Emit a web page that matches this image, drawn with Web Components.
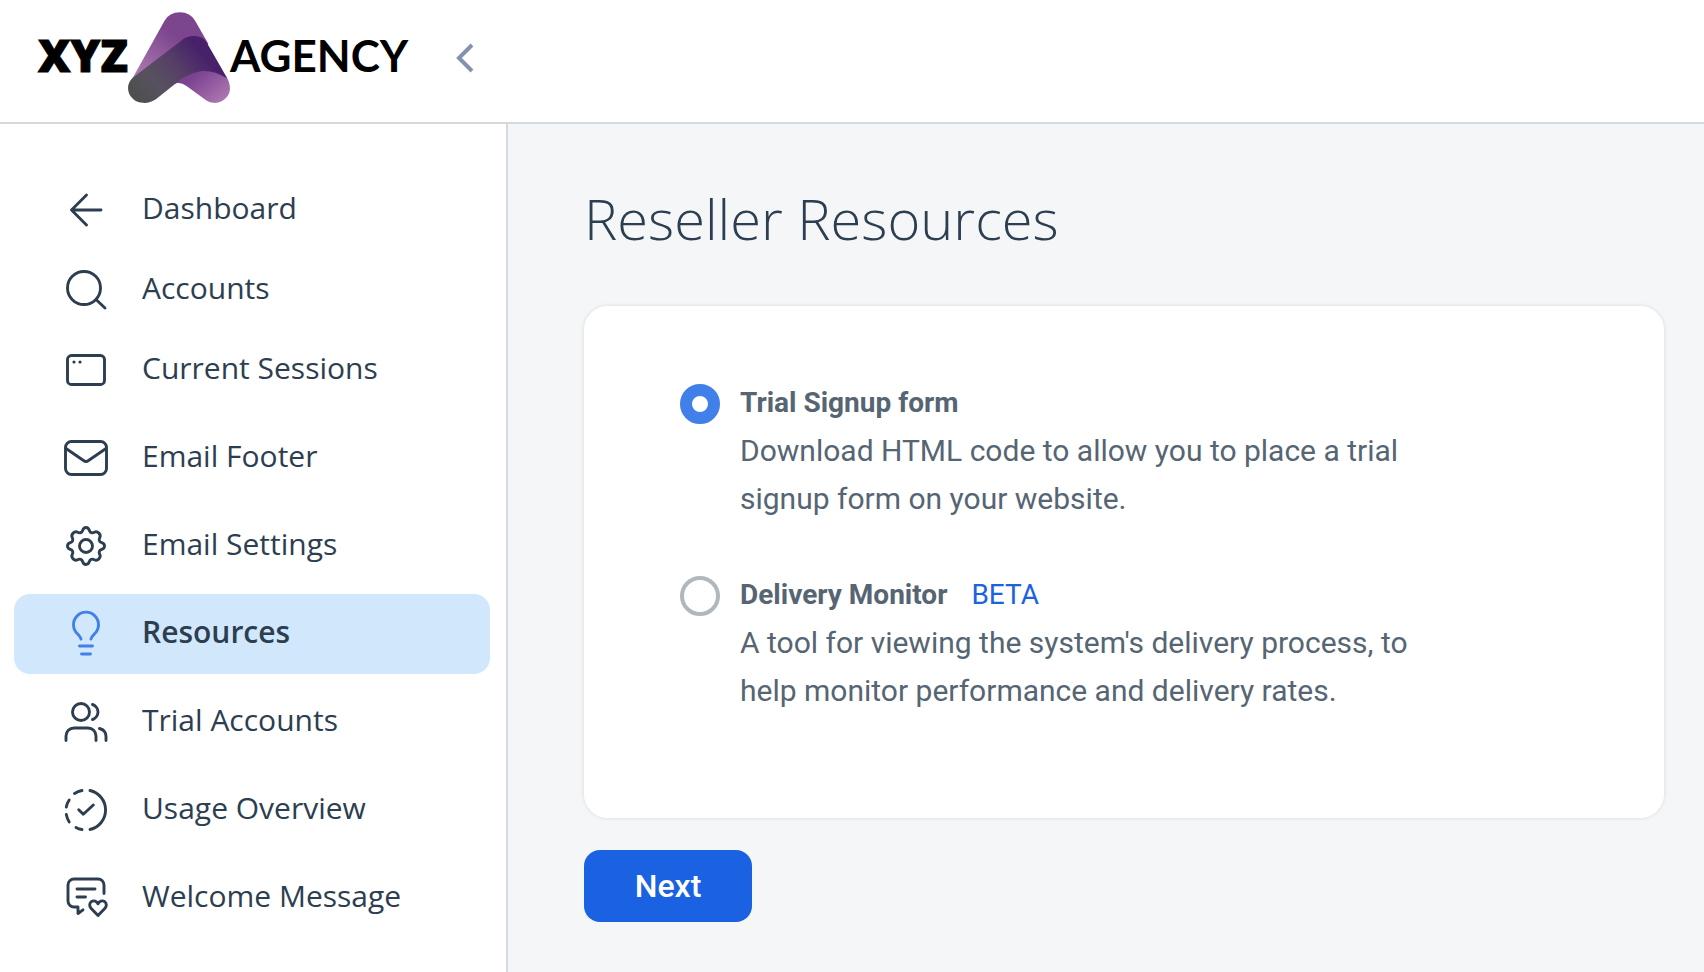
<!DOCTYPE html>
<html lang="en">
<head>
<meta charset="utf-8">
<meta name="viewport" content="width=device-width, initial-scale=1">
<title>Reseller Resources</title>
<style>
    html, body {
        height: 100%;
    }
    body {
        margin: 0;
        --ink: #2c3e50;
        --muted: #566573;
        --line: #d5d9dd;
        --blue: #1b62e2;
        --blue-light: #4080e8;
        color: var(--ink);
        font-family: "Open Sans", "Liberation Sans", sans-serif;
    }
</style>
</head>
<body>
<app-shell>
    <app-header slot="header"></app-header>
    <side-nav slot="nav">
        <nav-item icon="back">Dashboard</nav-item>
        <nav-item icon="search">Accounts</nav-item>
        <nav-item icon="window">Current Sessions</nav-item>
        <nav-item icon="mail" spaced>Email Footer</nav-item>
        <nav-item icon="gear" spaced>Email Settings</nav-item>
        <nav-item icon="bulb" spaced active>Resources</nav-item>
        <nav-item icon="users" spaced>Trial Accounts</nav-item>
        <nav-item icon="usage" spaced>Usage Overview</nav-item>
        <nav-item icon="message" spaced>Welcome Message</nav-item>
    </side-nav>
    <resource-page heading="Reseller Resources">
        <resource-picker></resource-picker>
    </resource-page>
</app-shell>

<script>
const icons = {
    back: '<path d="M37 22H7.500M22.500 7L7.500 22l15 15"/>',
    search: '<circle cx="20" cy="20" r="16.500"/><path d="M32 31.500l9 8.500"/>',
    window: '<rect x="3.500" y="7.500" width="37" height="29" rx="4"/><path stroke-width="3.200" d="M10 14h.01M16 14h.01"/>',
    mail: '<rect x="1.500" y="5.500" width="41" height="33" rx="6"/><path d="M2 12.500l17.500 12q2.500 1.800 5 0L42 12.500"/>',
    gear: '<circle cx="22" cy="22" r="6.500"/><path d="M22 3.500c2 0 2.800 1.200 3.300 2.800c.7 2.400 2.800 3.200 5 2c3.200-1.800 7.200 2.200 5.400 5.400c-1.200 2.200-.4 4.300 2 5c1.600.5 2.800 1.300 2.800 3.300c0 2-1.200 2.800-2.800 3.300c-2.400.7-3.200 2.800-2 5c1.800 3.200-2.200 7.200-5.400 5.400c-2.200-1.200-4.300-.4-5 2c-.5 1.600-1.300 2.800-3.300 2.800c-2 0-2.800-1.200-3.300-2.800c-.7-2.400-2.800-3.200-5-2c-3.200 1.800-7.200-2.200-5.400-5.400c1.200-2.200.4-4.300-2-5c-1.600-.5-2.800-1.300-2.800-3.300c0-2 1.200-2.800 2.800-3.300c2.400-.7 3.200-2.800 2-5c-1.800-3.200 2.200-7.200 5.400-5.400c2.200 1.200 4.300.4 5-2c.5-1.600 1.300-2.800 3.300-2.800z"/>',
    bulb: '<path d="M17 27c-.3-2-1.500-3-3.500-5.200a12.500 12.500 0 1 1 17 0C28.500 24 27.300 25 27 27M15.500 34h13M17.500 42h9"/>',
    users: '<circle cx="17" cy="12" r="8.500"/><path d="M28.500 4.500c3 1 5.500 4 5.500 7.500s-2.500 6.500-5.500 7.500M2 40.500V36a8 8 0 0 1 8-8h14a8 8 0 0 1 8 8v4.500M35.500 28.500c4 1 6.500 4 6.500 8v4"/>',
    usage: '<path d="M26 2.500a20 20 0 0 1 0 39M18 2.500q-4 .8-7.500 3M5.200 12q-2.200 3.200-2.900 7M2.300 26.500q.8 4 2.900 7.500M12 39.500q2.800 1.600 6 2M14.700 21.700l4.600 4.600 10-9.300"/>',
    message: '<path d="M40 17.500V9a6 6 0 0 0-6-6H10a6 6 0 0 0-6 6v16a6 6 0 0 0 6 6h4v6.500l5-3.700M13 13h18M13 21h8.500M34 39.500l-7-7.300c-2-2.200-1.600-5.200.4-6.600c2.400-1.500 5.300-.5 6.600 2.200c1.300-2.700 4.200-3.700 6.600-2.200c2 1.400 2.400 4.400.4 6.600z"/>'
};

class AppShell extends HTMLElement {
    constructor() {
        super();
        this.attachShadow({mode: 'open'});
        this.shadowRoot.innerHTML = `
            <style>
                :host {
                    display: flex;
                    flex-direction: column;
                    min-height: 100%;
                }
                .body {
                    display: flex;
                    flex: 1;
                }
            </style>
            <slot name="header"></slot>
            <div class="body">
                <slot name="nav"></slot>
                <slot></slot>
            </div>
        `;
    }
}

class AppHeader extends HTMLElement {
    constructor() {
        super();
        this.attachShadow({mode: 'open'});
        this.shadowRoot.innerHTML = `
            <style>
                :host {
                    display: block;
                    background: #fff;
                    border-bottom: 2px solid var(--line);
                }
                header {
                    display: flex;
                    align-items: center;
                    gap: 40px;
                    padding: 12px 38px 18px;
                }
                .logo {
                    display: flex;
                    align-items: center;
                    color: #000;
                    font: 700 44px/48px Lato, "Liberation Sans", sans-serif;
                    text-decoration: none;
                }
                .logo span {
                    padding-bottom: 6px;
                }
                .logo .heavy {
                    font-family: "Open Sans", "Liberation Sans", sans-serif;
                    font-size: 45px;
                    font-weight: 800;
                    -webkit-text-stroke: 1px #000;
                }
                .logo svg {
                    width: 102px;
                    height: 92px;
                }
                svg {
                    display: block;
                }
                button {
                    padding: 8px;
                    border: 0;
                    background: none;
                    cursor: pointer;
                }
            </style>
            <header>
                <a class="logo" href="#">
                    <span class="heavy">XYZ</span>
                    <svg viewBox="0 0 307 276" aria-hidden="true">
                        <defs>
                            <linearGradient id="top" x1="0" y1="1" x2=".8" y2=".2">
                                <stop offset="0" stop-color="#b07db3"/>
                                <stop offset=".75" stop-color="#7d458d"/>
                            </linearGradient>
                            <linearGradient id="foot" x1=".2" y1=".2" x2="1" y2=".9">
                                <stop offset=".2" stop-color="#7b4290"/>
                                <stop offset="1" stop-color="#b07bb4"/>
                            </linearGradient>
                            <linearGradient id="band" x1="0" y1=".9" x2="1" y2=".35">
                                <stop offset=".08" stop-color="#4f4f50"/>
                                <stop offset=".3" stop-color="#57525f"/>
                                <stop offset=".55" stop-color="#574067"/>
                                <stop offset=".85" stop-color="#47216a"/>
                            </linearGradient>
                        </defs>
                        <path fill="url(#top)" d="M14 198L110 26Q124 0 156 0Q188 0 202 26L242 96L120 190Z"/>
                        <path fill="url(#foot)" d="M138 217L190 160L260 150L298 198Q307 212 307 232A46 44 0 0 1 236 266L176 222Q156 208 138 217Z"/>
                        <path fill="url(#band)" d="M16 196L160 86Q176 72 198 72Q224 72 236 90L299 200Q250 170 208 180Q185 186 164 198L84 262Q66 274 46 273A46 46 0 0 1 0 228Q1 208 16 196Z"/>
                    </svg>
                    <span>AGENCY</span>
                </a>
                <button type="button" aria-label="Collapse menu">
                    <svg width="20" height="32" viewBox="0 0 20 32" fill="none" stroke="#8492b0" stroke-width="4"><path d="M16 3L3 16l13 13"/></svg>
                </button>
            </header>
        `;
    }
}

class SideNav extends HTMLElement {
    constructor() {
        super();
        this.attachShadow({mode: 'open'});
        this.shadowRoot.innerHTML = `
            <style>
                :host {
                    display: block;
                    box-sizing: border-box;
                    flex: 0 0 508px;
                    background: #fff;
                    border-right: 2px solid var(--line);
                }
                nav {
                    display: flex;
                    flex-direction: column;
                    padding: 46px 16px 24px 14px;
                }
            </style>
            <nav><slot></slot></nav>
        `;
    }
}

class NavItem extends HTMLElement {
    constructor() {
        super();
        this.attachShadow({mode: 'open'});
        const icon = icons[this.getAttribute('icon')] || '';
        const current = this.hasAttribute('active') ? 'aria-current="page"' : '';
        this.shadowRoot.innerHTML = `
            <style>
                :host {
                    display: block;
                }
                :host([spaced]) {
                    margin-top: 8px;
                }
                a {
                    display: flex;
                    align-items: center;
                    gap: 34px;
                    height: 80px;
                    padding-left: 50px;
                    border-radius: 16px;
                    color: var(--ink);
                    font-size: 30px;
                    line-height: 40px;
                    text-decoration: none;
                }
                span {
                    padding-bottom: 4px;
                }
                svg {
                    flex: none;
                    fill: none;
                    stroke: currentColor;
                    stroke-width: 2.9;
                    stroke-linecap: round;
                    stroke-linejoin: round;
                    overflow: visible;
                }
                :host([active]) a {
                    background: #d1e7fc;
                    font-weight: 600;
                }
                :host([active]) svg {
                    stroke: var(--blue-light);
                }
            </style>
            <a href="#" ${current}>
                <svg width="44" height="44" viewBox="0 0 44 44" aria-hidden="true">${icon}</svg>
                <span><slot></slot></span>
            </a>
        `;
    }
}

class ResourcePage extends HTMLElement {
    constructor() {
        super();
        this.attachShadow({mode: 'open'});
        this.shadowRoot.innerHTML = `
            <style>
                :host {
                    display: block;
                    flex: 1;
                    min-width: 0;
                    background: #f4f6f8;
                }
                main {
                    padding: 58px 40px 40px 76px;
                }
                h1 {
                    margin: 0 0 52px;
                    font-size: 56px;
                    line-height: 72px;
                    font-weight: 300;
                }
            </style>
            <main>
                <h1>${this.getAttribute('heading') || ''}</h1>
                <slot></slot>
            </main>
        `;
    }
}

class ResourcePicker extends HTMLElement {
    constructor() {
        super();
        this.attachShadow({mode: 'open'});
        this.shadowRoot.innerHTML = `
            <style>
                :host {
                    display: block;
                    color: var(--muted);
                    font-family: Roboto, "Liberation Sans", sans-serif;
                }
                fieldset {
                    display: flex;
                    flex-direction: column;
                    gap: 48px;
                    margin: 0 0 32px;
                    padding: 73px 96px 103px;
                    border: 0;
                    border-radius: 24px;
                    background: #fff;
                    box-shadow: 0 0 4px rgba(0, 0, 0, .12);
                }
                .option {
                    display: flex;
                    align-items: flex-start;
                    gap: 20px;
                }
                input {
                    appearance: none;
                    box-sizing: border-box;
                    flex: none;
                    width: 40px;
                    height: 40px;
                    margin: 5px 0 0;
                    border: 4px solid #b0b8bf;
                    border-radius: 50%;
                    background: #fff;
                }
                input:checked {
                    border: 12px solid var(--blue-light);
                }
                .text {
                    max-width: 700px;
                    font-size: 30px;
                    line-height: 48px;
                }
                .title {
                    display: flex;
                    gap: 24px;
                    font-size: 28px;
                }
                label {
                    font-weight: 700;
                }
                .beta {
                    color: var(--blue);
                }
                p {
                    margin: 0;
                }
                button {
                    display: block;
                    min-width: 168px;
                    height: 72px;
                    padding: 0 48px;
                    border: 0;
                    border-radius: 16px;
                    background: var(--blue);
                    color: #fff;
                    font: 500 32px/40px Roboto, "Liberation Sans", sans-serif;
                    cursor: pointer;
                }
            </style>
            <form>
                <fieldset aria-label="Resource">
                    <div class="option">
                        <input type="radio" name="resource" id="trial" value="trial" aria-describedby="trial-text" checked>
                        <div class="text">
                            <div class="title"><label for="trial">Trial Signup form</label></div>
                            <p id="trial-text">Download HTML code to allow you to place a trial signup form on your website.</p>
                        </div>
                    </div>
                    <div class="option">
                        <input type="radio" name="resource" id="monitor" value="monitor" aria-describedby="monitor-text">
                        <div class="text">
                            <div class="title"><label for="monitor">Delivery Monitor</label><span class="beta">BETA</span></div>
                            <p id="monitor-text">A tool for viewing the system's delivery process, to help monitor performance and delivery rates.</p>
                        </div>
                    </div>
                </fieldset>
                <button type="button">Next</button>
            </form>
        `;
    }
}

customElements.define('app-shell', AppShell);
customElements.define('app-header', AppHeader);
customElements.define('side-nav', SideNav);
customElements.define('nav-item', NavItem);
customElements.define('resource-page', ResourcePage);
customElements.define('resource-picker', ResourcePicker);
</script>
</body>
</html>
